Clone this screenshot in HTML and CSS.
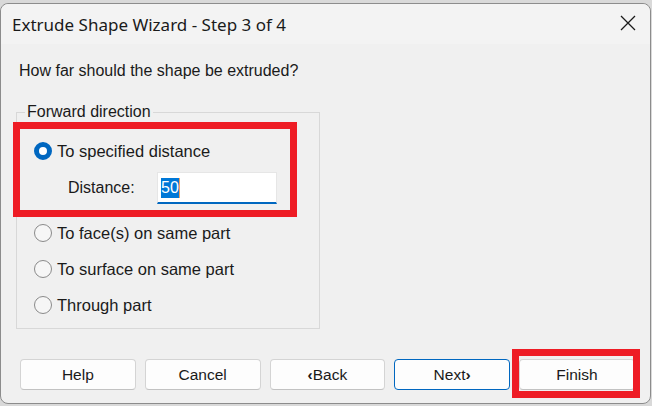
FILE: index.html
```html
<!DOCTYPE html>
<html>
<head>
<meta charset="utf-8">
<link rel="stylesheet" href="styles.css">
</head>
<body>
<div class="window">
  <div class="titlebar">
    <span class="title">Extrude Shape Wizard - Step 3 of 4</span>
    <svg class="close" width="16" height="16" viewBox="0 0 16 16"><path d="M1 1 L15 15 M15 1 L1 15" stroke="#1a1a1a" stroke-width="1.3" fill="none"/></svg>
  </div>
  <div class="content">
    <p class="question">How far should the shape be extruded?</p>
    <fieldset class="group">
      <legend>Forward direction</legend>
      <div class="highlighted">
        <label class="radio-row"><span class="radio checked"></span>To specified distance</label>
        <div class="distance-row">
          <span class="dist-label">Distance:</span>
          <div class="input"><span class="sel">50</span><span class="caret"></span></div>
        </div>
        <div class="annot annot-group"></div>
      </div>
      <label class="radio-row"><span class="radio"></span>To face(s) on same part</label>
      <label class="radio-row"><span class="radio"></span>To surface on same part</label>
      <label class="radio-row"><span class="radio"></span>Through part</label>
    </fieldset>
    <div class="buttons">
      <button class="btn">Help</button>
      <button class="btn">Cancel</button>
      <button class="btn"><b class="chev">&lsaquo;</b>Back</button>
      <button class="btn default">Next<b class="chev">&rsaquo;</b></button>
      <div class="finish-wrap">
        <button class="btn">Finish</button>
        <div class="annot annot-finish"></div>
      </div>
    </div>
  </div>
</div>
</body>
</html>
```

FILE: styles.css
```css
html, body {
  margin: 0;
  padding: 0;
}
body {
  width: 652px;
  height: 406px;
  background: #d9d9d9;
  overflow: hidden;
  font-family: "Liberation Sans", Arial, sans-serif;
  color: #1a1a1a;
}
.window {
  box-sizing: border-box;
  margin-top: 3px;
  width: 651px;
  height: 401px;
  background: #f0f0f0;
  border: 1px solid #8c8c8c;
  border-radius: 8px;
  display: flex;
  flex-direction: column;
}
.titlebar {
  height: 40px;
  display: flex;
  align-items: center;
  justify-content: space-between;
  padding: 0 14px 0 11px;
  background: #f3f3f3;
  border-radius: 8px 8px 0 0;
}
.title {
  font-family: "Noto Sans", "Segoe UI", sans-serif;
  font-size: 17px;
  color: #1a1a1a;
}
.close {
  display: block;
  margin-top: -2px;
}
.content {
  flex: 1;
  display: flex;
  flex-direction: column;
  padding: 0 15px;
}
.question {
  margin: 18px 0 0 3px;
  font-size: 16px;
  line-height: 18px;
}
.group {
  margin: 24px 0 0 0;
  width: 304px;
  height: 225px;
  box-sizing: border-box;
  border: 1px solid #d8d8d8;
  padding: 19px 0 0 17px;
  min-width: 0;
}
.group legend {
  font-size: 16px;
  line-height: 16px;
  padding: 0 2px;
  margin-left: -9px;
}
.highlighted {
  position: relative;
  margin-bottom: 17px;
}
.radio-row {
  display: flex;
  align-items: center;
  height: 24px;
  font-size: 16.5px;
  margin-bottom: 12px;
}
.highlighted .radio-row {
  margin-bottom: 9px;
}
.radio {
  box-sizing: border-box;
  width: 18px;
  height: 18px;
  border-radius: 50%;
  border: 1.5px solid #8a8a8a;
  background: #f6f6f6;
  margin-right: 5px;
  flex: none;
}
.radio.checked {
  border: 5px solid #0067c0;
  background: #fff;
}
.distance-row {
  display: flex;
  align-items: center;
  padding-left: 34px;
  font-size: 16px;
}
.dist-label {
  width: 89px;
}
.input {
  box-sizing: border-box;
  width: 120px;
  height: 32px;
  background: #fff;
  border: 1px solid #e6e6e6;
  border-bottom: 2px solid #0067c0;
  display: flex;
  align-items: center;
  padding-left: 3px;
}
.sel {
  background: #0078d7;
  color: #fff;
  line-height: 20px;
  font-size: 16px;
}
.caret {
  width: 1px;
  height: 20px;
  background: #f0a060;
}
.annot {
  position: absolute;
  border: 7px solid #ee1c25;
  pointer-events: none;
}
.annot-group {
  left: -21px;
  top: -17px;
  width: 284px;
  height: 95px;
  box-sizing: border-box;
}
.buttons {
  margin-top: auto;
  margin-bottom: 13px;
  display: flex;
  gap: 9px;
  padding-left: 4px;
}
.btn {
  box-sizing: border-box;
  width: 116px;
  height: 31px;
  background: #fdfdfd;
  border: 1px solid #d4d4d4;
  border-bottom-color: #c2c2c2;
  border-radius: 4px;
  font-family: "Liberation Sans", Arial, sans-serif;
  font-size: 15.5px;
  color: #1a1a1a;
  padding: 0;
}
.chev {
  font-weight: bold;
}
.btn.default {
  border: 1px solid #0067c0;
}
.finish-wrap {
  position: relative;
}
.annot-finish {
  left: -7px;
  top: -10px;
  width: 128px;
  height: 49px;
  box-sizing: border-box;
}
```
